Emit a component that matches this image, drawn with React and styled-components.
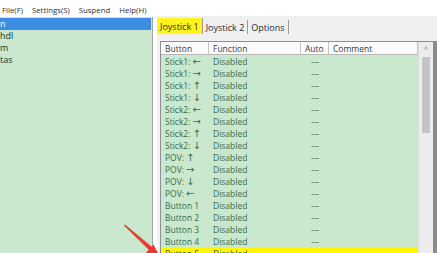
import React from "react";
import styled, { createGlobalStyle } from "styled-components";

const GlobalStyle = createGlobalStyle`
  html, body {
    margin: 0;
    padding: 0;
    background: #ffffff;
  }
  * {
    box-sizing: border-box;
  }
`;

const Page = styled.div`
  position: relative;
  width: 437px;
  height: 253px;
  overflow: hidden;
  background: #ffffff;
  font-family: "Open Sans", "DejaVu Sans", sans-serif;
  font-size: 8.5px;
  color: #2b2b2b;
  display: flex;
  flex-direction: column;
`;

const MenuBar = styled.div`
  height: 16px;
  display: flex;
  align-items: center;
  gap: 9px;
  padding: 4px 0 0 2px;
  font-size: 7.8px;
  color: #333333;
`;

const MenuItem = styled.span`
  white-space: nowrap;
`;

const Body = styled.div`
  flex: 1;
  display: flex;
  min-height: 0;
`;

const LeftPanel = styled.div`
  width: 153px;
  margin-top: 1px;
  background: #c9e8cd;
  border-right: 1px solid #a3a3a3;
  padding-top: 1px;
  display: flex;
  flex-direction: column;
  font-size: 9px;
`;

const ListRow = styled.div`
  height: 12px;
  line-height: 12px;
  white-space: nowrap;
  color: ${(p) => (p.$selected ? "#ffffff" : "#27352a")};
  background: ${(p) => (p.$selected ? "#3d8ee2" : "transparent")};
  margin-right: 1px;
`;

const Spacer = styled.div`
  width: 4px;
  background: #ffffff;
`;

const RightPanel = styled.div`
  flex: 1;
  display: flex;
  flex-direction: column;
  background: #f0f0f0;
  padding-top: 2px;
`;

const TabStrip = styled.div`
  height: 16px;
  display: flex;
  align-items: stretch;
  font-size: 9px;
  color: #2b2b2b;
`;

const Tab = styled.div`
  display: flex;
  align-items: center;
  padding: 0 3px;
  background: ${(p) => (p.$active ? "#fff41c" : "transparent")};
  border-right: 1px solid #9c9c9c;
  margin: ${(p) => (p.$active ? "0" : "2px 0 0 0")};
  white-space: nowrap;
`;

const TableFrame = styled.div`
  flex: 1;
  margin: 7px 0 0 3px;
  display: flex;
  border-left: 1px solid #8c9096;
  border-top: 1px solid #8c9096;
  border-right: 4px solid #8b8b8b;
  min-height: 0;
`;

const Table = styled.div`
  width: 257px;
  display: flex;
  flex-direction: column;
  background: #c9e8cd;
`;

const columns = "48px 92px 28px 1fr";

const HeaderRow = styled.div`
  height: 15px;
  display: grid;
  grid-template-columns: ${columns};
  background: #fbfbfb;
  border-bottom: 1px solid #b8b8b8;
  font-size: 8.5px;
  color: #3a3a3a;
`;

const HeaderCell = styled.div`
  display: flex;
  align-items: center;
  padding: 1px 0 0 4px;
  border-right: 1px solid #c4c4c4;
  white-space: nowrap;
`;

const Row = styled.div`
  height: 12px;
  display: grid;
  grid-template-columns: ${columns};
  background: ${(p) => (p.$highlight ? "#fff600" : "transparent")};
  color: #3c6a4b;
`;

const Cell = styled.div`
  line-height: 13px;
  padding-left: ${(p) => (p.$center ? "0" : "4px")};
  text-align: ${(p) => (p.$center ? "center" : "left")};
  white-space: nowrap;
  overflow: hidden;
`;

const ArrowGlyph = styled.span`
  font-family: "DejaVu Sans", sans-serif;
  font-size: 10px;
  margin-left: 2px;
`;

const Scrollbar = styled.div`
  flex: 1;
  display: flex;
  flex-direction: column;
  align-items: center;
  background: #ececec;
  border-left: 1px solid #dcdcdc;
`;

const ScrollArrow = styled.div`
  width: 100%;
  height: 15px;
  display: flex;
  align-items: center;
  justify-content: center;
  color: #7a7a7a;
  font-size: 7px;
`;

const Thumb = styled.div`
  width: 8px;
  height: 76px;
  background: #c4c4c4;
`;

const Arrow = styled.svg`
  position: absolute;
  left: 0;
  top: 0;
  pointer-events: none;
`;

const leftItems = ["n", "hdl", "m", "tas"];

const rows = [
  ["Stick1:", "←"],
  ["Stick1:", "→"],
  ["Stick1:", "↑"],
  ["Stick1:", "↓"],
  ["Stick2:", "←"],
  ["Stick2:", "→"],
  ["Stick2:", "↑"],
  ["Stick2:", "↓"],
  ["POV:", "↑"],
  ["POV:", "→"],
  ["POV:", "↓"],
  ["POV:", "←"],
  ["Button 1"],
  ["Button 2"],
  ["Button 3"],
  ["Button 4"],
  ["Button 5"],
];

export default function App() {
  return (
    <Page>
      <GlobalStyle />
      <MenuBar>
        <MenuItem>File(F)</MenuItem>
        <MenuItem>Settings(S)</MenuItem>
        <MenuItem>Suspend</MenuItem>
        <MenuItem>Help(H)</MenuItem>
      </MenuBar>
      <Body>
        <LeftPanel>
          {leftItems.map((t, i) => (
            <ListRow key={t} $selected={i === 0}>
              {t}
            </ListRow>
          ))}
        </LeftPanel>
        <Spacer />
        <RightPanel>
          <TabStrip>
            <Tab $active>Joystick 1</Tab>
            <Tab>Joystick 2</Tab>
            <Tab>Options</Tab>
          </TabStrip>
          <TableFrame>
            <Table>
              <HeaderRow>
                <HeaderCell>Button</HeaderCell>
                <HeaderCell>Function</HeaderCell>
                <HeaderCell>Auto</HeaderCell>
                <HeaderCell>Comment</HeaderCell>
              </HeaderRow>
              {rows.map(([name, dir]) => (
                <Row key={name + (dir || "")} $highlight={name === "Button 5"}>
                  <Cell>
                    {name}
                    {dir && <ArrowGlyph>{dir}</ArrowGlyph>}
                  </Cell>
                  <Cell>Disabled</Cell>
                  <Cell $center>---</Cell>
                  <Cell />
                </Row>
              ))}
            </Table>
            <Scrollbar>
              <ScrollArrow>^</ScrollArrow>
              <Thumb />
            </Scrollbar>
          </TableFrame>
        </RightPanel>
      </Body>
      <Arrow width="437" height="253" viewBox="0 0 437 253">
        <polygon points="124,225.5 125,224.5 152,247 149,250" fill="#e83a2e" />
        <polygon points="161,259 146,252.5 153.5,244.5" fill="#e83a2e" />
      </Arrow>
    </Page>
  );
}
